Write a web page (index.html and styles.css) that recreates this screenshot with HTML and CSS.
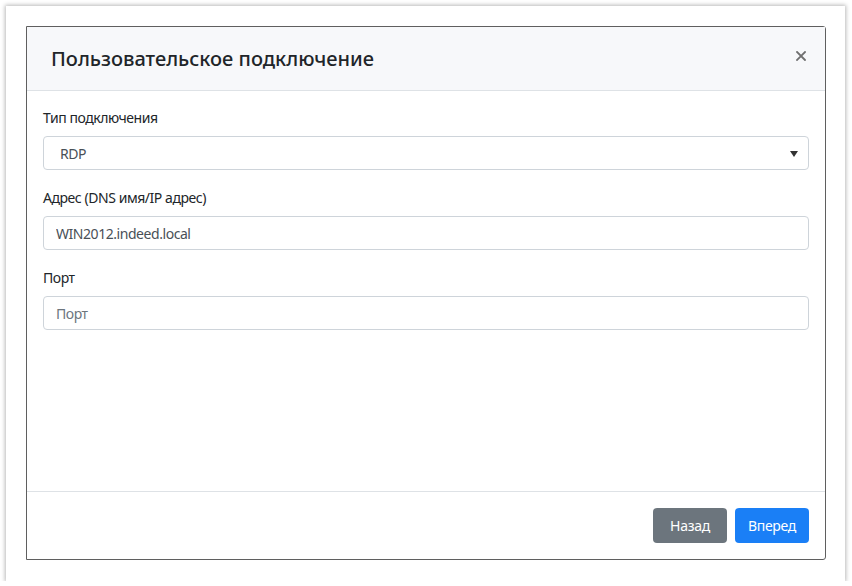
FILE: index.html
```html
<!DOCTYPE html>
<html lang="ru">
<head>
<meta charset="utf-8">
<title>Пользовательское подключение</title>
<link rel="stylesheet" href="styles.css">
</head>
<body>
<div class="frame">
  <div class="modal">
    <div class="modal-header">
      <h5 class="modal-title">Пользовательское подключение</h5>
      <button class="close" type="button" aria-label="Close">
        <svg width="10" height="10" viewBox="0 0 10 10"><path d="M1 1L9 9M9 1L1 9" stroke="#6f6f6f" stroke-width="1.8" stroke-linecap="square"/></svg>
      </button>
    </div>
    <div class="modal-body">
      <div class="form-group">
        <label class="label">Тип подключения</label>
        <div class="select">
          <span class="select-value">RDP</span>
          <svg class="caret" width="8" height="6" viewBox="0 0 8 6"><path d="M0 0H8L4 6Z" fill="#333"/></svg>
        </div>
      </div>
      <div class="form-group">
        <label class="label">Адрес (DNS имя/IP адрес)</label>
        <input class="input" type="text" value="WIN2012.indeed.local">
      </div>
      <div class="form-group">
        <label class="label">Порт</label>
        <input class="input" type="text" placeholder="Порт">
      </div>
    </div>
    <div class="modal-footer">
      <button class="btn btn-secondary" type="button">Назад</button>
      <button class="btn btn-primary" type="button">Вперед</button>
    </div>
  </div>
</div>
</body>
</html>
```
FILE: styles.css
```css
* { box-sizing: border-box; }
html, body { margin: 0; padding: 0; background: #ffffff; }
body {
  font-family: "Noto Sans", "Open Sans", "Liberation Sans", sans-serif;
  color: #212529;
  font-size: 14px;
  line-height: 21px;
}
.frame {
  margin: 6px 0 0 6px;
  width: 839px;
  height: 575px;
  background: #fff;
  box-shadow: 0 0 4px 1px rgba(0, 0, 0, 0.28);
  padding: 20px;
}
.modal {
  width: 800px;
  height: 534px;
  border: 1px solid #5f5f5f;
  border-radius: 0 3px 3px 0;
  display: flex;
  flex-direction: column;
  background: #fff;
}
.modal-header {
  height: 64px;
  flex: none;
  background: #f7f8fa;
  border-bottom: 1px solid #dee2e6;
  display: flex;
  align-items: center;
  justify-content: space-between;
  padding: 0 16px 0 24px;
}
.modal-title {
  margin: 0;
  font-size: 20px;
  font-weight: 500;
  line-height: 30px;
  color: #212529;
}
.close {
  border: 0;
  background: transparent;
  padding: 0;
  width: 16px;
  height: 16px;
  display: flex;
  align-items: center;
  justify-content: center;
  margin-top: -6px;
}
.modal-body {
  flex: 1;
  padding: 16px;
}
.form-group { margin-bottom: 17px; }
.label {
  display: block;
  margin-bottom: 8px;
  color: #212529;
  letter-spacing: -0.45px;
}
.select, .input {
  display: flex;
  align-items: center;
  width: 100%;
  height: 34px;
  border: 1px solid #ced4da;
  border-radius: 4px;
  background: #fff;
  color: #495057;
  font-family: inherit;
  font-size: 14px;
  letter-spacing: -0.45px;
}
.select {
  padding: 0 10px 0 16px;
  justify-content: space-between;
}
.caret { margin-top: 1px; }
.input {
  padding: 0 12px;
  outline: none;
}
.input::placeholder { color: #6c757d; }
.modal-footer {
  flex: none;
  border-top: 1px solid #dee2e6;
  padding: 16px;
  display: flex;
  justify-content: flex-end;
  gap: 8px;
}
.btn {
  width: 74px;
  height: 35px;
  border: 0;
  border-radius: 4px;
  color: #fff;
  font-family: inherit;
  font-size: 14px;
  letter-spacing: -0.3px;
  padding: 0;
}
.btn-secondary { background: #6c757d; }
.btn-primary { background: #1a7ff6; }
```
